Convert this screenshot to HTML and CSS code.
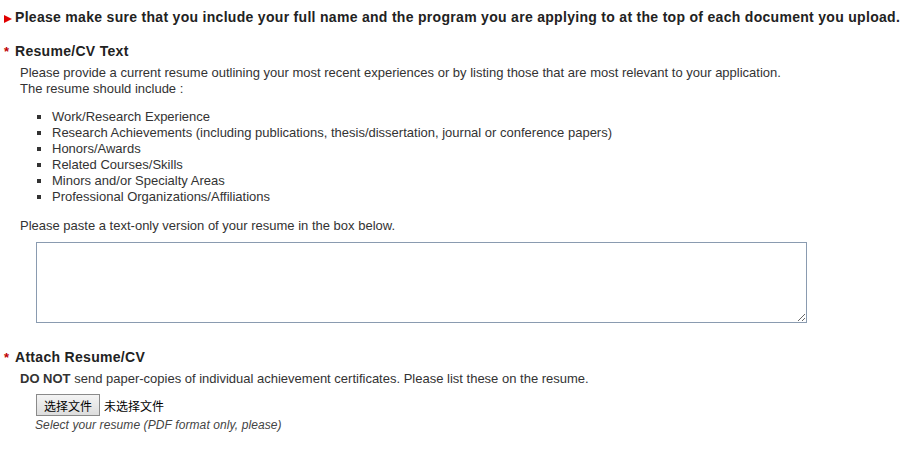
FILE: index.html
```html
<html>

<head>
    <link rel="stylesheet" href="styles.css">
</head>

<body>
    <p class="notice"><span class="arrow"></span>Please make sure that you include your full name and the program you are applying to at the top of each document you upload.</p>

    <div class="field">
        <h3><span class="req">*</span>Resume/CV Text</h3>
        <div class="body">
            <p class="intro">Please provide a current resume outlining your most recent experiences or by listing those that are most relevant to your application.<br>
            The resume should include :</p>
            <ul>
                <li>Work/Research Experience</li>
                <li>Research Achievements (including publications, thesis/dissertation, journal or conference papers)</li>
                <li>Honors/Awards</li>
                <li>Related Courses/Skills</li>
                <li>Minors and/or Specialty Areas</li>
                <li>Professional Organizations/Affiliations</li>
            </ul>
            <p class="paste">Please paste a text-only version of your resume in the box below.</p>
            <textarea class="resume"></textarea>
        </div>
    </div>

    <div class="field">
        <h3><span class="req">*</span>Attach Resume/CV</h3>
        <div class="body">
            <p class="warn"><b>DO NOT</b> send paper-copies of individual achievement certificates. Please list these on the resume.</p>
            <div class="upload">
                <button class="pick">选择文件</button>
                <span class="none">未选择文件</span>
            </div>
            <p class="hint">Select your resume (PDF format only, please)</p>
        </div>
    </div>
</body>

</html>
```

FILE: styles.css
```css
body {
    margin: 0;
    padding: 0 4px;
    background: #fff;
    color: #333;
    font-family: "Liberation Sans", Arial, sans-serif;
    font-size: 13px;
}
p {
    margin: 0;
}
.notice {
    display: flex;
    align-items: center;
    margin-top: 9px;
    font-size: 14px;
    font-weight: bold;
    color: #222;
    letter-spacing: 0.3px;
}
.arrow {
    width: 0;
    height: 0;
    border-top: 4.5px solid transparent;
    border-bottom: 4.5px solid transparent;
    border-left: 8px solid #e00000;
    margin: 3px 3px 0 0;
}
.field {
    margin-top: 18px;
}
.field + .field {
    margin-top: 26px;
}
h3 {
    margin: 0;
    font-size: 14px;
    font-weight: bold;
    color: #222;
    letter-spacing: 0.3px;
    display: flex;
    align-items: baseline;
}
.req {
    color: #c00000;
    width: 11px;
    font-size: 13px;
}
.body {
    padding-left: 16px;
    padding-top: 6px;
}
.intro {
    line-height: 16px;
}
ul {
    margin: 12px 0 13px 0;
    padding-left: 32px;
    list-style: square;
    line-height: 16px;
}
.paste {
    line-height: 16px;
}
.resume {
    display: block;
    margin: 8px 0 0 16px;
    width: 771px;
    height: 81px;
    border: 1px solid #8a9bb0;
    padding: 2px;
    box-sizing: border-box;
    resize: vertical;
}
.warn {
    line-height: 16px;
}
.warn b {
    color: #333;
}
.upload {
    display: flex;
    align-items: center;
    margin: 7px 0 0 16px;
}
.pick {
    font-family: "Noto Sans CJK SC", sans-serif;
    font-size: 12px;
    height: 22px;
    padding: 0 7px;
    border: 1px solid #8a8a8a;
    border-radius: 0;
    background: linear-gradient(#f4f4f4, #dddddd);
    color: #000;
    margin-right: 4px;
}
.none {
    font-family: "Noto Sans CJK SC", sans-serif;
    font-size: 12px;
    color: #000;
}
.hint {
    margin: 1px 0 0 15px;
    font-size: 12px;
    font-style: italic;
    color: #444;
    letter-spacing: 0.1px;
    line-height: 16px;
}
```
